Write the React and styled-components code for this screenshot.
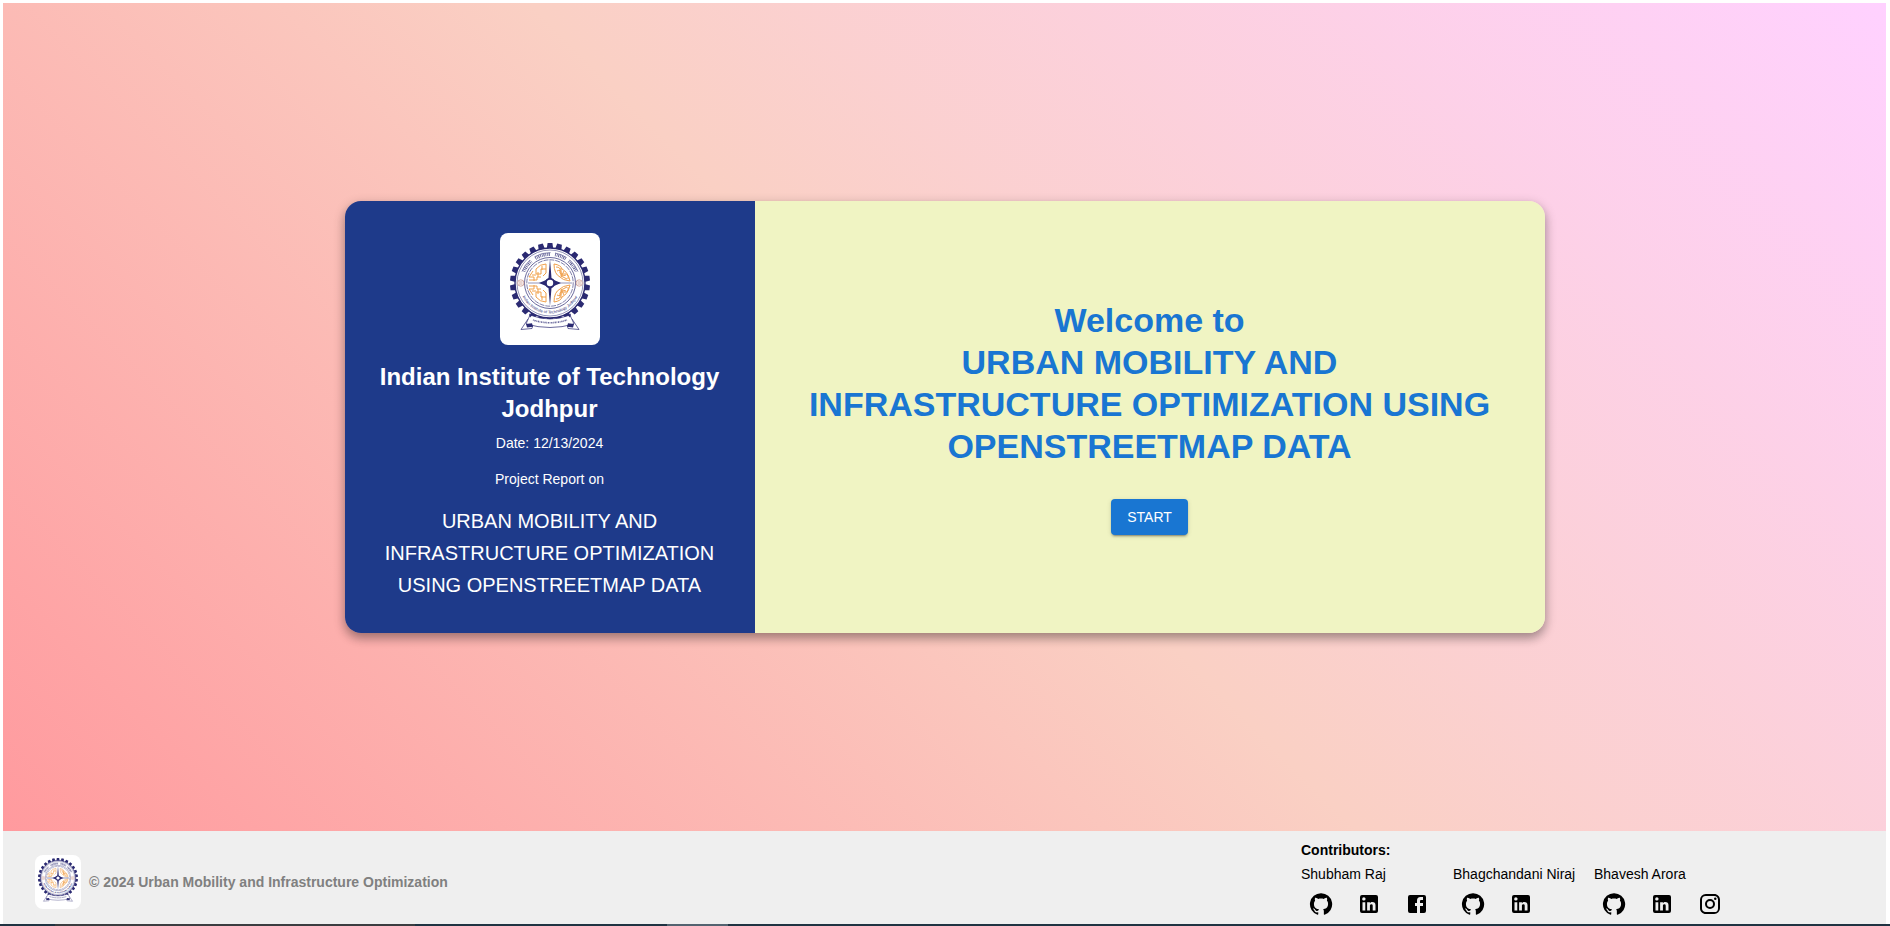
import React, { useId } from "react";
import styled, { createGlobalStyle } from "styled-components";

const GlobalStyle = createGlobalStyle`
  *, *::before, *::after { box-sizing: border-box; }
  body {
    margin: 0;
    background: #fff;
    color: #000;
    font-family: "Liberation Sans", Arial, sans-serif;
    font-size: 14px;
    line-height: 20px;
  }
  h1, h2, h3, p, ul { margin: 0; padding: 0; }
`;

const Page = styled.div`
  display: flex;
  flex-direction: column;
  min-height: 100vh;
`;

const Content = styled.div`
  flex: 1;
  display: flex;
  flex-direction: column;
  padding: 3px 4px 0 3px;
`;

const Hero = styled.main`
  flex: 1;
  display: flex;
  align-items: center;
  justify-content: center;
  padding: 16px;
  background: linear-gradient(45deg, #ff9a9e, #fad0c4, #ffd1ff);
`;

const Card = styled.section`
  display: flex;
  width: 100%;
  max-width: 1200px;
  border-radius: 16px;
  overflow: hidden;
  box-shadow: 0 4px 12px rgba(0, 0, 0, 0.3), 0 6px 10px rgba(0, 0, 0, 0.12);
`;

const InfoPanel = styled.div`
  flex: 0 0 410px;
  display: flex;
  flex-direction: column;
  align-items: center;
  padding: 32px;
  background: #1e3a8a;
  color: #fff;
  text-align: center;
`;

const WelcomePanel = styled.div`
  flex: 1;
  display: flex;
  flex-direction: column;
  align-items: center;
  justify-content: center;
  gap: 32px;
  padding: 32px 48px;
  background: #f0f4c3;
  text-align: center;
`;

const LogoTile = styled.span`
  display: block;
  flex: none;
  width: ${(p) => p.$width}px;
  border-radius: 8px;
  background: #fff;
  overflow: hidden;

  svg { display: block; width: 100%; height: auto; }
`;

const Institute = styled.h2`
  margin-top: 16px;
  font-size: 24px;
  line-height: 32px;
  font-weight: 700;
`;

const Detail = styled.p`
  margin-top: ${(p) => p.$gap}px;
`;

const ProjectName = styled.h3`
  margin-top: 16px;
  font-size: 20px;
  line-height: 32px;
  font-weight: 400;
`;

const Welcome = styled.h1`
  color: #1976d2;
  font-size: 34px;
  line-height: 42px;
  font-weight: 700;
`;

const StartButton = styled.button`
  height: 36px;
  padding: 0 16px;
  border: 0;
  border-radius: 4px;
  background: #1976d2;
  color: #fff;
  font: inherit;
  text-transform: uppercase;
  cursor: pointer;
  box-shadow: 0 3px 1px -2px rgba(0, 0, 0, 0.2), 0 2px 2px rgba(0, 0, 0, 0.14),
    0 1px 5px rgba(0, 0, 0, 0.12);
`;

const Footer = styled.footer`
  display: grid;
  grid-template-columns: 1fr 553px;
  align-items: center;
  padding: 9px 32px 0;
  background: #efefef;
`;

const Brand = styled.div`
  display: flex;
  align-items: center;
  gap: 8px;
  color: #808080;
  font-weight: 700;
`;

const ContributorsTitle = styled.p`
  font-weight: 700;
`;

const ContributorList = styled.ul`
  display: flex;
  gap: 16px;
  margin-top: 4px;
  list-style: none;
`;

const ContributorItem = styled.li`
  min-width: 125px;
`;

const IconRow = styled.div`
  display: flex;
  gap: 8px;
`;

const IconLink = styled.a`
  display: flex;
  padding: 8px;
  border-radius: 50%;
  color: #000;

  svg { width: 24px; height: 24px; fill: currentColor; }
`;

const Taskbar = styled.div`
  display: flex;
  height: 2px;
  padding-left: 55px;
  background: #1f3342;
`;

const TaskbarItem = styled.span`
  width: ${(p) => p.$width}px;
  margin-right: 252px;
  background: ${(p) => p.$color};
`;

const icons = {
  GitHub:
    "M12 1.27a11 11 0 00-3.48 21.46c.55.09.73-.28.73-.55v-1.84c-3.03.64-3.67-1.46-3.67-1.46-.55-1.29-1.28-1.65-1.28-1.65-.92-.65.1-.65.1-.65 1.1 0 1.73 1.1 1.73 1.1.92 1.65 2.57 1.2 3.21.92a2 2 0 01.64-1.47c-2.47-.27-5.04-1.19-5.04-5.5 0-1.1.46-2.1 1.2-2.84a3.76 3.76 0 010-2.93s.91-.28 3.11 1.1c1.8-.49 3.7-.49 5.5 0 2.1-1.38 3.02-1.1 3.02-1.1a3.76 3.76 0 01.1 2.93c.83.74 1.2 1.74 1.2 2.94 0 4.21-2.57 5.13-5.04 5.4.45.37.82.92.82 2.02v3.03c0 .27.1.64.73.55A11 11 0 0012 1.27",
  LinkedIn:
    "M19 3a2 2 0 0 1 2 2v14a2 2 0 0 1-2 2H5a2 2 0 0 1-2-2V5a2 2 0 0 1 2-2h14m-.5 15.5v-5.3a3.26 3.26 0 0 0-3.26-3.26c-.85 0-1.84.52-2.32 1.3v-1.11h-2.79v8.37h2.79v-4.93c0-.77.62-1.4 1.39-1.4a1.4 1.4 0 0 1 1.4 1.4v4.93h2.79M6.88 8.56a1.68 1.68 0 0 0 1.68-1.68c0-.93-.75-1.69-1.68-1.69a1.69 1.69 0 0 0-1.69 1.69c0 .93.76 1.68 1.69 1.68m1.39 9.94v-8.37H5.5v8.37h2.77z",
  Facebook:
    "M5 3h14a2 2 0 0 1 2 2v14a2 2 0 0 1-2 2H5a2 2 0 0 1-2-2V5a2 2 0 0 1 2-2m13 2h-2.5A3.5 3.5 0 0 0 12 8.5V11h-2v3h2v7h3v-7h3v-3h-3V9a1 1 0 0 1 1-1h2V5z",
  Instagram:
    "M7.8 2h8.4C19.4 2 22 4.6 22 7.8v8.4a5.8 5.8 0 0 1-5.8 5.8H7.8C4.6 22 2 19.4 2 16.2V7.8A5.8 5.8 0 0 1 7.8 2m-.2 2A3.6 3.6 0 0 0 4 7.6v8.8C4 18.39 5.61 20 7.6 20h8.8a3.6 3.6 0 0 0 3.6-3.6V7.6C20 5.61 18.39 4 16.4 4H7.6m9.65 1.5a1.25 1.25 0 0 1 1.25 1.25A1.25 1.25 0 0 1 17.25 8 1.25 1.25 0 0 1 16 6.75a1.25 1.25 0 0 1 1.25-1.25M12 7a5 5 0 0 1 5 5 5 5 0 0 1-5 5 5 5 0 0 1-5-5 5 5 0 0 1 5-5m0 2a3 3 0 0 0-3 3 3 3 0 0 0 3 3 3 3 0 0 0 3-3 3 3 0 0 0-3-3z",
};

const contributors = [
  { name: "Shubham Raj", links: ["GitHub", "LinkedIn", "Facebook"] },
  { name: "Bhagchandani Niraj", links: ["GitHub", "LinkedIn"] },
  { name: "Bhavesh Arora", links: ["GitHub", "LinkedIn", "Instagram"] },
];

const TEETH = Array.from({ length: 26 }, (_, i) => (i * 360) / 26);
const NAVY = "#2b2a72";
const ORANGE = "#f0a04b";

/* Institute seal: a toothed wheel around a compass star, over a ribbon. */
function Seal({ viewBox = "0 0 100 112" }) {
  const arc = useId();
  return (
    <svg viewBox={viewBox} role="img" aria-label="IIT Jodhpur seal">
      <g fill={NAVY}>
        {TEETH.map((a) => (
          <path key={a} d="M46.8 15.5L47.6 10H52.4L53.2 15.5z" transform={`rotate(${a} 50 50)`} />
        ))}
      </g>
      <circle cx="50" cy="50" r="35" fill="#fff" stroke={NAVY} strokeWidth="1.4" />
      <circle cx="50" cy="50" r="33" fill="none" stroke={NAVY} strokeWidth="0.5" />
      <circle cx="50" cy="50" r="25.5" fill="none" stroke={NAVY} strokeWidth="0.7" />
      <circle cx="50" cy="50" r="23.2" fill="none" stroke={NAVY} strokeWidth="0.6" strokeDasharray="5 1" />

      {/* upper legend: four words of fine strokes */}
      <g fill="none" stroke={NAVY} opacity="0.75">
        <path d="M22 38.500A30.400 30.400 0 0 1 30 27M34.500 23.800A30.400 30.400 0 0 1 50.500 19.600M55 20A30.400 30.400 0 0 1 66.500 24.500M69.500 26.700A30.400 30.400 0 0 1 78 38.500" strokeWidth="0.8" />
        <path d="M23.900 38.500A28.600 28.600 0 0 1 31.500 28.300M35.500 25.500A28.600 28.600 0 0 1 50.500 21.400M55 21.800A28.600 28.600 0 0 1 65.500 26M68.500 28.300A28.600 28.600 0 0 1 76.100 38.500" strokeWidth="3" strokeDasharray="0.8 1 0.7 0.8 1.1 0.9" />
      </g>

      {/* lower legend */}
      <path id={arc} d="M20.500 58.500A30.800 30.800 0 0 0 79.500 58.500" fill="none" />
      <text fill={NAVY} fontSize="4" textAnchor="middle">
        <textPath href={`#${arc}`} startOffset="50%">Indian Institute of Technology Jodhpur</textPath>
      </text>

      <g fill="#fff" stroke="#c9958a" strokeWidth="0.8">
        <circle cx="20.800" cy="50" r="3.2" />
        <circle cx="79.200" cy="50" r="3.2" />
        <path d="M19 49h3.600M19 51h3.600M77.400 49h3.600M77.400 51h3.600" />
      </g>

      {/* filigree quadrants */}
      <g fill="none" stroke={ORANGE} strokeWidth="1">
        <path d="M46 31q-6 0-10 5v5h5v-5h5M46 31v9l-3 3M33 38l-4 6h5v4M29 47h8v-3h4M38 39v5M42 33v4M32 42h4" />
        <path d="M46 69q-6 0-10-5v-5h5v5h5M46 69v-9l-3-3M33 62l-4-6h5v-4M29 53h8v3h4M38 61v-5M42 67v-4M32 58h4" />
        <path d="M54 31q7 1 8 5q6 3 8 12q-8-1-10-4q-6-3-6-13M56 34q5 0 4 4t4 3 4 5M57 38q4-2 4 2t5 2M61 35v8l6 3M64 38l-3 6" />
        <path d="M54 69q7-1 8-5q6-3 8-12q-8 1-10 4q-6 3-6 13M56 66q5 0 4-4t4-3 4-5M57 62q4 2 4-2t5-2M61 65v-8l6-3M64 62l-3-6" />
      </g>

      <g fill={NAVY}>
        <path d="M50 26L51.600 46L61 50L51.600 54L50 73L48.400 54L39 50L48.400 46z" />
        <path d="M28 49.700h44v0.600h-44z" />
        <circle cx="50" cy="50" r="5.2" />
      </g>
      <circle cx="50" cy="50" r="3.2" fill="#fff" />

      {/* ribbon */}
      <g stroke={NAVY} strokeWidth="0.7" fill="#fff">
        <path d="M28 86L21 96.500L32 95.500L33 91z" />
        <path d="M72 86L79 96.500L68 95.500L67 91z" />
        <path d="M30 82Q50 90 70 82L74 91Q50 98 26 91z" />
      </g>
      <path d="M26 91l6-.8 1 3.500-6 .8zM74 91l-6-.8-1 3.500 6 .8zM29 80.500l3 2-2 2zM71 80.500l-3 2 2 2z" fill={NAVY} />
      <path d="M33 87Q50 92.500 67 87" fill="none" stroke={NAVY} strokeWidth="1.6" strokeDasharray="0.7 0.7 1.4 0.6" opacity="0.7" />
    </svg>
  );
}

function Contributor({ name, links }) {
  return (
    <ContributorItem>
      <p>{name}</p>
      <IconRow>
        {links.map((site) => (
          <IconLink key={site} href="#" aria-label={`${name} on ${site}`}>
            <svg viewBox="0 0 24 24" aria-hidden="true">
              <path d={icons[site]} />
            </svg>
          </IconLink>
        ))}
      </IconRow>
    </ContributorItem>
  );
}

export default function App() {
  return (
    <>
      <GlobalStyle />
      <Page>
        <Content>
          <Hero>
            <Card>
              <InfoPanel>
                <LogoTile $width={100}><Seal /></LogoTile>
                <Institute>Indian Institute of Technology Jodhpur</Institute>
                <Detail $gap={8}>Date: 12/13/2024</Detail>
                <Detail $gap={16}>Project Report on</Detail>
                <ProjectName>URBAN MOBILITY AND INFRASTRUCTURE OPTIMIZATION USING OPENSTREETMAP DATA</ProjectName>
              </InfoPanel>
              <WelcomePanel>
                <Welcome>
                  Welcome to
                  <br />
                  URBAN MOBILITY AND INFRASTRUCTURE OPTIMIZATION USING OPENSTREETMAP DATA
                </Welcome>
                <StartButton type="button">Start</StartButton>
              </WelcomePanel>
            </Card>
          </Hero>
          <Footer>
            <Brand>
              <LogoTile $width={46}><Seal viewBox="4 4 92 108" /></LogoTile>
              <p>© 2024 Urban Mobility and Infrastructure Optimization</p>
            </Brand>
            <div>
              <ContributorsTitle>Contributors:</ContributorsTitle>
              <ContributorList>
                {contributors.map((c) => (
                  <Contributor key={c.name} {...c} />
                ))}
              </ContributorList>
            </div>
          </Footer>
        </Content>
        <Taskbar>
          <TaskbarItem $width={360} $color="#3b3d40" />
          <TaskbarItem $width={61} $color="#536370" />
        </Taskbar>
      </Page>
    </>
  );
}
